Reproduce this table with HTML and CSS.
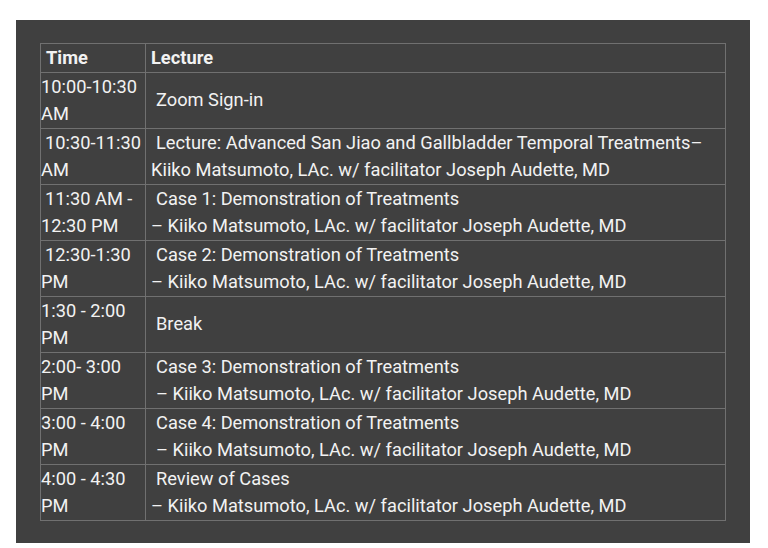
FILE: index.html
```html
<!DOCTYPE html>
<html>
<head>
<meta charset="utf-8">
<link rel="stylesheet" href="styles.css">
</head>
<body>
<div class="panel">
<table class="schedule">
<thead>
<tr><th class="time-h">Time</th><th class="lec-h">Lecture</th></tr>
</thead>
<tbody>
<tr><td class="time">10:00-10:30 AM</td><td class="lec"><span class="ind">Zoom Sign-in</span></td></tr>
<tr><td class="time"><span class="sp">10:30-11:30</span> AM</td><td class="lec"><span class="ind">Lecture: Advanced San Jiao and Gallbladder Temporal Treatments–</span><br>Kiiko Matsumoto, LAc. w/ facilitator Joseph Audette, MD</td></tr>
<tr><td class="time"><span class="sp">11:30 AM -</span> 12:30 PM</td><td class="lec"><span class="ind">Case 1: Demonstration of Treatments</span><br>– Kiiko Matsumoto, LAc. w/ facilitator Joseph Audette, MD</td></tr>
<tr><td class="time"><span class="sp">12:30-1:30</span> PM</td><td class="lec"><span class="ind">Case 2: Demonstration of Treatments</span><br>– Kiiko Matsumoto, LAc. w/ facilitator Joseph Audette, MD</td></tr>
<tr><td class="time">1:30 - 2:00 PM</td><td class="lec"><span class="ind">Break</span></td></tr>
<tr><td class="time">2:00- 3:00 PM</td><td class="lec"><span class="ind">Case 3: Demonstration of Treatments</span><br><span class="ind">– Kiiko Matsumoto, LAc. w/ facilitator Joseph Audette, MD</span></td></tr>
<tr><td class="time">3:00 - 4:00 PM</td><td class="lec"><span class="ind">Case 4: Demonstration of Treatments</span><br><span class="ind">– Kiiko Matsumoto, LAc. w/ facilitator Joseph Audette, MD</span></td></tr>
<tr><td class="time">4:00 - 4:30 PM</td><td class="lec"><span class="ind">Review of Cases</span><br>– Kiiko Matsumoto, LAc. w/ facilitator Joseph Audette, MD</td></tr>
</tbody>
</table>
</div>
</body>
</html>
```
FILE: styles.css
```css
html, body {
  margin: 0;
  padding: 0;
  background: #ffffff;
}
body {
  padding: 20px 18px 5px 16px;
  font-family: Roboto, "Liberation Sans", sans-serif;
}
.panel {
  width: 734px;
  height: 523px;
  box-sizing: border-box;
  background: #404040;
  padding: 23px 24px;
}
.schedule {
  width: 100%;
  border-collapse: collapse;
  color: #f2f2f2;
  font-size: 18.25px;
  line-height: 27.5px;
}
.schedule th,
.schedule td {
  border: 1px solid #707070;
  padding: 0;
  text-align: left;
  vertical-align: middle;
}
.schedule th {
  font-weight: 700;
  padding: 0 5px;
  height: 27px;
}
.schedule .time-h {
  width: 94px;
}
.schedule .time {
  padding: 0;
  height: 55px;
}
.schedule .lec {
  padding: 0 0 0 5px;
}
.ind {
  padding-left: 5px;
}
.sp {
  padding-left: 4px;
}
```
